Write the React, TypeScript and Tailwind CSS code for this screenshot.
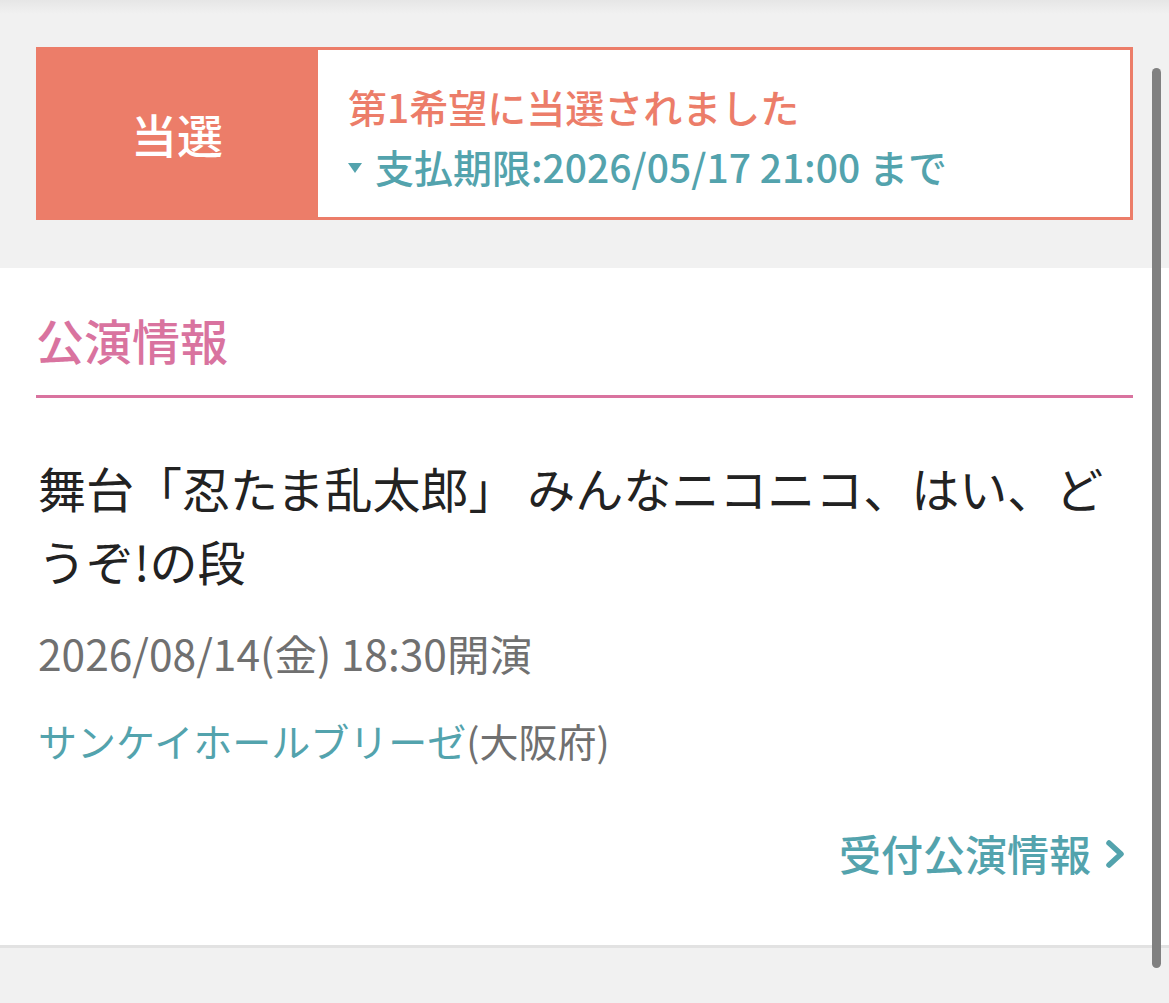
const ff = "font-['Noto_Sans_CJK_JP','Noto_Sans',sans-serif]";

function ResultBanner() {
  return (
    <div className="flex h-[173px]">
      <div className="flex w-[282px] shrink-0 items-center justify-center bg-[#ec7d69] text-[46px] font-medium text-white">
        当選
      </div>
      <div className="flex flex-1 flex-col justify-center gap-[10px] border-[3px] border-l-0 border-[#ec7d69] bg-white pl-[30px] pt-[4px]">
        <p className="text-[39px] leading-[50px] font-medium text-[#ec7d69]">
          第1希望に当選されました
        </p>
        <p className="flex items-center text-[39px] leading-[50px] font-medium text-[#53a3ad]">
          <span className="mr-[13px] mt-[4px] inline-block h-0 w-0 border-x-[7px] border-t-[10px] border-x-transparent border-t-[#53a3ad]" />
          支払期限:2026/05/17 21:00 まで
        </p>
      </div>
    </div>
  );
}

function PerformanceCard() {
  return (
    <div className="border-b-[3px] border-[#e2e2e2] bg-white px-[36px] pt-[37px] pb-[62px]">
      <h2 className="border-b-[3px] border-[#d9739f] pb-[21px] text-[48px] leading-[69px] font-medium text-[#d9739f]">
        公演情報
      </h2>
      <p className="mt-[53px] pl-[2px] text-[48px] leading-[73px] text-[#222]">
        舞台「忍たま乱太郎」 みんなニコニコ、はい、どうぞ!の段
      </p>
      <p className="mt-[26px] pl-[2px] text-[42.5px] leading-[60px] text-[#707070]">
        2026/08/14(金) 18:30開演
      </p>
      <p className="mt-[27px] pl-[2px] text-[39px] leading-[60px] text-[#707070]">
        <span className="text-[#53a3ad]">サンケイホールブリーゼ</span>(大阪府)
      </p>
      <div className="mt-[53px] flex justify-end">
        <a className="flex items-center text-[42px] leading-[60px] font-medium text-[#53a3ad]">
          受付公演情報
          <svg
            viewBox="0 0 24 32"
            className="ml-[12px] mr-[6px] mt-[2px] h-[32px] w-[24px]"
            fill="none"
            stroke="currentColor"
            strokeWidth={5.5}
            strokeLinecap="round"
            strokeLinejoin="round"
          >
            <polyline points="6,5 18,16 6,27" />
          </svg>
        </a>
      </div>
    </div>
  );
}

export default function App() {
  return (
    <div className={`relative min-h-[1003px] overflow-hidden bg-[#f1f1f1] ${ff}`}>
      <div className="bg-gradient-to-b from-[#e6e6e6] to-[#f1f1f1] to-[14px] px-[36px] pt-[47px] pb-[48px]">
        <ResultBanner />
      </div>
      <PerformanceCard />
      {/* overlay scrollbar */}
      <div className="absolute top-[68px] right-[8px] h-[900px] w-[9px] rounded-full bg-[#808080]" />
    </div>
  );
}
